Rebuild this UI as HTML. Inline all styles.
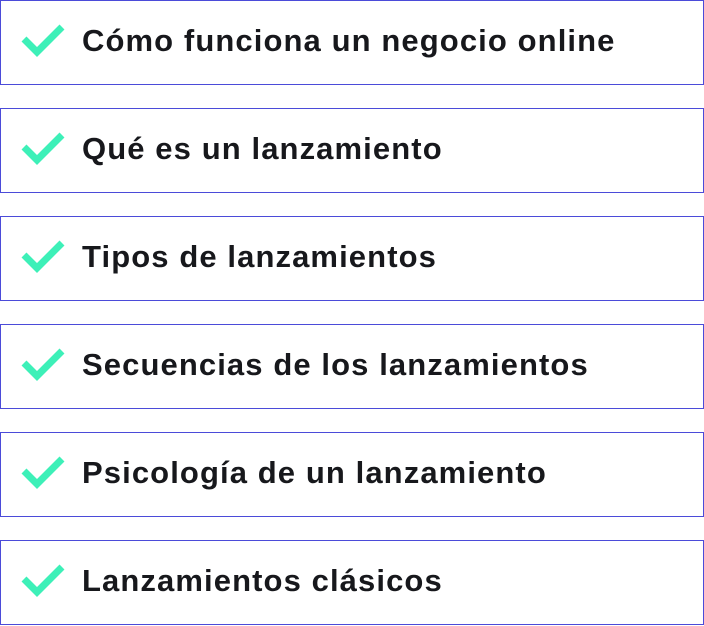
<!DOCTYPE html>
<html><head><meta charset="utf-8"><style>
html,body{margin:0;padding:0;background:#fff;width:704px;height:626px;overflow:hidden}
.b{position:absolute;left:0;width:702px;height:83px;border:1px solid #4b4bd9;box-sizing:content-box}
.b svg{position:absolute;left:20px;top:20px}
.b span{position:absolute;left:81px;top:20px;font:600 31px/40px "Liberation Sans",sans-serif;color:#17181c;letter-spacing:1.1px;white-space:nowrap}
</style></head><body>
<div class="b" style="top:0"><svg width="46" height="36"><polyline points="3,18 16,31 41,6" fill="none" stroke="#3df0b8" stroke-width="7"/></svg><span>Cómo funciona un negocio online</span></div>
<div class="b" style="top:108px"><svg width="46" height="36"><polyline points="3,18 16,31 41,6" fill="none" stroke="#3df0b8" stroke-width="7"/></svg><span>Qué es un lanzamiento</span></div>
<div class="b" style="top:216px"><svg width="46" height="36"><polyline points="3,18 16,31 41,6" fill="none" stroke="#3df0b8" stroke-width="7"/></svg><span>Tipos de lanzamientos</span></div>
<div class="b" style="top:324px"><svg width="46" height="36"><polyline points="3,18 16,31 41,6" fill="none" stroke="#3df0b8" stroke-width="7"/></svg><span>Secuencias de los lanzamientos</span></div>
<div class="b" style="top:432px"><svg width="46" height="36"><polyline points="3,18 16,31 41,6" fill="none" stroke="#3df0b8" stroke-width="7"/></svg><span>Psicología de un lanzamiento</span></div>
<div class="b" style="top:540px"><svg width="46" height="36"><polyline points="3,18 16,31 41,6" fill="none" stroke="#3df0b8" stroke-width="7"/></svg><span>Lanzamientos clásicos</span></div>
</body></html>
